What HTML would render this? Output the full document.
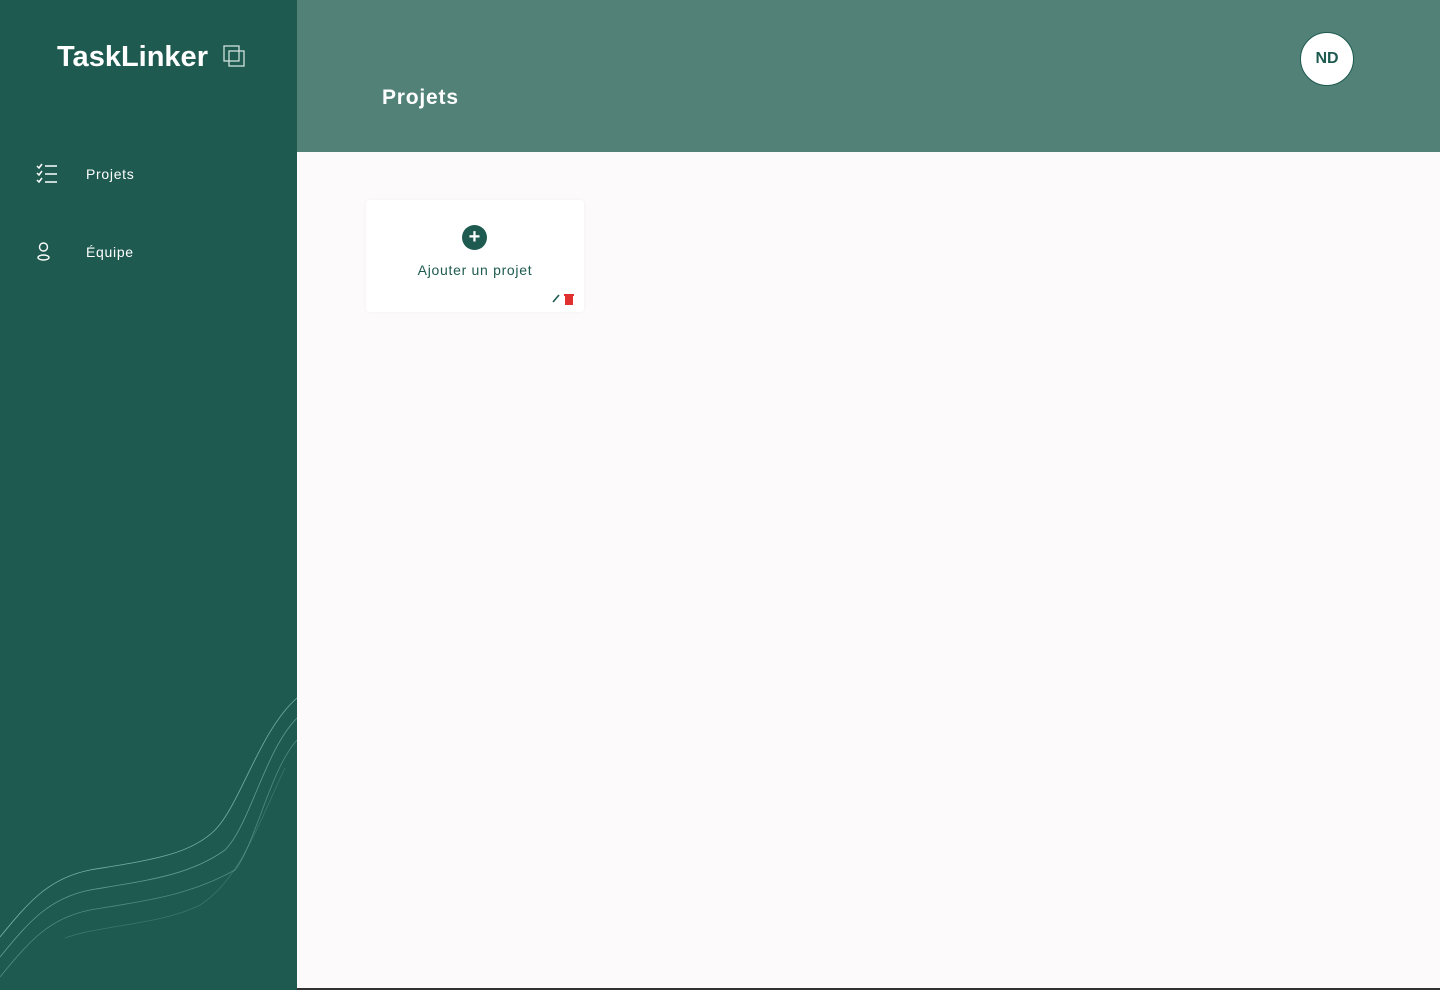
<!DOCTYPE html>
<html><head><meta charset="utf-8"><style>
*{margin:0;padding:0;box-sizing:border-box}
body{width:1440px;height:990px;background:#fcfafa;font-family:"Liberation Sans",sans-serif;position:relative;overflow:hidden}
.side{position:absolute;left:0;top:0;width:297px;height:990px;background:#1e5a50}
.logo{position:absolute;left:57px;top:41px;color:#fff;font-weight:bold;font-size:29px;letter-spacing:0px}
.nav{position:absolute;left:86px;color:#fff;font-size:14px;letter-spacing:0.7px}
.head{position:absolute;left:297px;top:0;width:1143px;height:152px;background:#518177}
.title{position:absolute;left:382px;top:86px;color:#fff;font-size:21px;font-weight:bold;letter-spacing:0.8px}
.av{position:absolute;left:1300px;top:32px;width:54px;height:54px;border-radius:50%;background:#fff;border:1px solid #1e5a50;color:#1e5a50;font-weight:bold;font-size:16px;text-align:center;line-height:52px}
.card{position:absolute;left:366px;top:200px;width:218px;height:112px;background:#fff;border-radius:4px;box-shadow:0 0 4px rgba(0,0,0,0.04)}
.plus{position:absolute;left:96px;top:25px;width:25px;height:25px;border-radius:50%;background:#1e5a50;color:#fff;text-align:center;line-height:24px;font-weight:bold;font-size:20px}
.lbl{position:absolute;left:0;width:218px;top:62px;text-align:center;color:#1e5a50;font-size:14px;letter-spacing:0.7px}
</style></head><body>
<div class="side">
<div class="logo">TaskLinker</div>
<svg style="position:absolute;left:223px;top:45px" width="24" height="24" viewBox="0 0 24 24" fill="none" stroke="#cfe0dc" stroke-width="1.3"><rect x="1" y="1" width="15" height="15"/><rect x="6" y="6" width="15" height="15"/></svg>
<svg style="position:absolute;left:36px;top:163px" width="22" height="22" viewBox="0 0 22 22" fill="none" stroke="#fff" stroke-width="1.5"><path d="M1 3l2 2 3-4M1 10l2 2 3-4M1 17l2 2 3-4M9 3h12M9 11h12M9 19h12"/></svg>
<div class="nav" style="top:166px">Projets</div>
<svg style="position:absolute;left:36px;top:242px" width="16" height="20" viewBox="0 0 16 20" fill="none" stroke="#fff" stroke-width="1.4"><circle cx="7.5" cy="5" r="4"/><ellipse cx="7.5" cy="15.5" rx="5.5" ry="2.5"/></svg>
<div class="nav" style="top:244px">Équipe</div>
<svg style="position:absolute;left:0;top:680px" width="297" height="310" fill="none" stroke="#8fc7b8" stroke-width="0.8">
<path d="M0 257 C30 220 50 198 90 190 C150 180 190 175 215 150 C240 125 260 50 297 18" opacity="0.8"/>
<path d="M0 277 C30 240 50 218 90 210 C150 200 190 195 225 170 C250 145 265 70 297 38" opacity="0.6"/>
<path d="M0 297 C30 260 50 238 90 230 C150 220 190 215 235 190 C255 165 270 90 297 60" opacity="0.45"/>
<path d="M65 258 C100 245 160 245 200 225 C240 200 260 140 285 88" opacity="0.25"/>
</svg>
</div>
<div class="head"></div>
<div class="title">Projets</div>
<div class="av">ND</div>
<div class="card">
<div class="plus">+</div>
<div class="lbl">Ajouter un projet</div>
<svg style="position:absolute;left:186px;top:94px" width="8" height="9"><path d="M1 8L7 1" stroke="#1e5a50" stroke-width="1.6"/></svg>
<svg style="position:absolute;left:198px;top:94px" width="10" height="11"><rect x="0" y="0" width="10" height="2" fill="#e03030"/><rect x="1" y="2" width="8" height="9" fill="#e03030"/></svg>
</div>
<div style="position:absolute;left:297px;top:988px;width:1143px;height:2px;background:#333"></div>
</body></html>
